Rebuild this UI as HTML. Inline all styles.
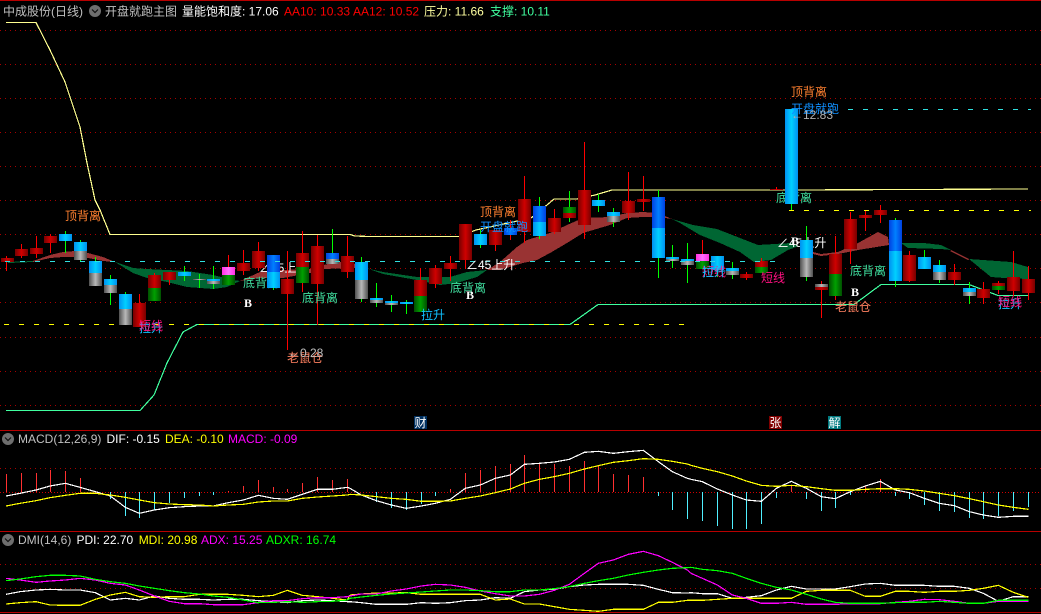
<!DOCTYPE html>
<html><head><meta charset="utf-8">
<style>
html,body{margin:0;padding:0;background:#000;width:1041px;height:614px;overflow:hidden}
svg{display:block;position:absolute;left:0;top:0}
text{font-family:"Liberation Sans","WenQuanYi Zen Hei","Noto Sans CJK SC",sans-serif;font-size:12px;white-space:pre}
.l{font-family:"WenQuanYi Zen Hei","Noto Sans CJK SC","Liberation Sans",sans-serif}
.bb{font-family:"Liberation Serif",serif;font-weight:bold;font-size:12px;fill:#fff}
.ln polyline{fill:none;stroke-width:1.2;vector-effect:non-scaling-stroke;shape-rendering:crispEdges}
.k rect{width:13px;shape-rendering:crispEdges}
.r{fill:url(#gr)}.g{fill:url(#gg)}.c{fill:url(#gc)}.b{fill:url(#gb)}.y{fill:url(#gy)}.p{fill:url(#gp)}
</style></head><body>
<svg width="1041" height="614" viewBox="0 0 1041 614" xmlns="http://www.w3.org/2000/svg">
<defs>
<linearGradient id="gr"><stop offset="0" stop-color="#780000"/><stop offset=".5" stop-color="#d00000"/><stop offset="1" stop-color="#780000"/></linearGradient>
<linearGradient id="gg"><stop offset="0" stop-color="#005000"/><stop offset=".5" stop-color="#00a000"/><stop offset="1" stop-color="#005000"/></linearGradient>
<linearGradient id="gc"><stop offset="0" stop-color="#0090f0"/><stop offset=".5" stop-color="#00d0ff"/><stop offset="1" stop-color="#0090f0"/></linearGradient>
<linearGradient id="gb"><stop offset="0" stop-color="#0040e0"/><stop offset=".5" stop-color="#0080ff"/><stop offset="1" stop-color="#0040e0"/></linearGradient>
<linearGradient id="gy"><stop offset="0" stop-color="#505050"/><stop offset=".5" stop-color="#b8b8b8"/><stop offset="1" stop-color="#505050"/></linearGradient>
<linearGradient id="gp"><stop offset="0" stop-color="#ff30e0"/><stop offset=".5" stop-color="#ff70ff"/><stop offset="1" stop-color="#ff30e0"/></linearGradient>
</defs>
<rect width="1041" height="614" fill="#000"/>

<!-- panel borders -->
<g fill="#b80000" shape-rendering="crispEdges">
<rect x="0" y="0" width="1041" height="1"/>
<rect x="0" y="430" width="1041" height="1"/>
<rect x="0" y="531" width="1041" height="1"/>
<rect x="0" y="612" width="1041" height="1"/>
</g>

<!-- dotted grid -->
<g stroke="#a80000" stroke-width="1" stroke-dasharray="1 4" shape-rendering="crispEdges" fill="none">
<path d="M0 30.5H1041M0 64.5H1041M0 98.5H1041M0 132.5H1041M0 166.5H1041M0 200.5H1041M0 234.5H1041M0 268.5H1041M0 302.5H1041M0 337.5H1041M0 371.5H1041M0 405.5H1041"/>
<path d="M0 468.5H1041M0 564.5H1041M0 588.5H1041"/>
<path d="M0 492.5H1041" stroke="#d00000" stroke-dasharray="1 2"/>
</g>

<!-- cloud ribbon -->
<g shape-rendering="crispEdges">
<polygon fill="#006633" points="8,262 33,261 33,262 8,263"/>
<polygon fill="#993333" points="33,261 50,255 63,252 75,251 88,253 103,257 115,262 103,261 88,258 75,257 63,257 50,258 33,262"/>
<polygon fill="#006633" points="115,262 133,268 147,269 167,270 187,271 213,275 233,280 240,281 227,287 213,289 187,287 167,282 147,278 133,273"/>
<polygon fill="#993333" points="240,281 260,272 283,270 310,269 323,265 340,262 350,262 369,269 350,268 323,269 310,273 283,278 260,278"/>
<polygon fill="#006633" points="369,269 383,272 417,277 450,277 467,272 487,270 477,277 457,283 440,285 417,280 383,274"/>
<polygon fill="#993333" points="487,270 500,262 517,247 527,240 550,233 567,225 583,218 610,217 627,213 643,212 657,213 665,216 672,219 665,218 657,217 643,217 627,218 610,225 583,233 567,243 550,253 537,260 523,263 500,270"/>
<polygon fill="#006633" points="672,219 693,225 705,227 717,229 740,238 758,245 791,243 799,246 788,250 771,260 754,262 740,252 720,243 700,235 680,223"/>
<polygon fill="#993333" points="799,246 813,252 821,254 838,252 858,243 878,232 888,237 889,245 858,250 838,254 821,256 813,254"/>
<polygon fill="#006633" points="901,243 924,243 941,245 951,250 941,249 908,248"/>
<polygon fill="#993333" points="951,250 969,259 968,260 950,251"/>
<polygon fill="#006633" points="969,259 1011,262 1028,267 1028,279 1004,278 991,277"/>
</g>

<!-- main lines -->
<g class="ln">
<polyline stroke="#ffff90" points="6,22.5 36,22.5 50,50 65,82 80,127 87,163 95,200 100,210 110,234.5 350,234.5 355,236 369,236.5 459,236.5 476,230 531,218 547,205 554,199 577,199 595,195 612,190 790,190 1028,189"/>
<polyline stroke="#40ff9f" points="6,410.5 140,410.5 154,395 167,363 183,332 197,324.5 570,324.5 598,304.5 854,304.5 881,284.5 969,284.5 998,295.5 1028,295.5"/>
</g>
<path d="M4 324.5H690" stroke="#ffff00" stroke-dasharray="5 10" shape-rendering="crispEdges" fill="none"/>
<path d="M789 210.5H1031" stroke="#ffff00" stroke-dasharray="5 10" shape-rendering="crispEdges" fill="none"/>
<path d="M848 109.5H1031" stroke="#30e0e0" stroke-dasharray="5 10" shape-rendering="crispEdges" fill="none"/>

<!-- labels behind candles -->
<g class="l">
<text x="243" y="287" fill="#40e0a0">底背离</text>
<text x="259" y="272" fill="#fff">∠45上升</text>
<text x="776" y="202" fill="#40e0a0">底背离</text>
<text x="777" y="247" fill="#fff">∠45上升</text>
</g>

<!-- wicks -->
<path fill="none" stroke="#ff0000" stroke-width="1" shape-rendering="crispEdges" d="M6.5 256V271M21.5 244V258M36.5 236V258M50.5 234V253M139.5 294V327M154.5 273V276M169.5 272V285M228.5 255V268M243.5 250V275M258.5 242V271M287.5 251V350M302.5 231V292M317.5 235V325M347.5 236V278M420.5 268V281M435.5 265V288M450.5 256V281M465.5 224V269M495.5 230V251M510.5 220V240M524.5 176V243M554.5 209V234M584.5 142V239M628.5 172V220M643.5 176V211M702.5 240V255M746.5 272V280M761.5 258V262M776.5 187V190M821.5 281V318M835.5 236V300M850.5 212V264M865.5 211V231M880.5 205V223M909.5 251V282M954.5 264V285M983.5 282V304M998.5 281V294M1013.5 251V296M1028.5 266V300"/>
<path fill="none" stroke="#00ff00" stroke-width="1" shape-rendering="crispEdges" d="M65.5 231V253M80.5 240V262M95.5 257V262M110.5 275V305M125.5 292V295M184.5 266V281M199.5 274V288M213.5 266V289M273.5 286V290M332.5 229V253M361.5 257V302M376.5 283V307M391.5 295V312M406.5 300V314M480.5 230V248M539.5 197V239M569.5 191V222M598.5 194V212M613.5 208V227M658.5 190V278M672.5 245V268M687.5 243V283M717.5 256V277M732.5 262V279M791.5 204V210M806.5 226V281M895.5 218V287M924.5 250V269M939.5 260V283M969.5 282V304"/>

<!-- candles -->
<g class="k">
<rect class="r" x="1" y="258" height="4"/><rect class="r" x="15" y="249" height="7"/><rect class="r" x="30" y="248" height="6"/><rect class="r" x="44" y="236" height="7"/>
<rect class="c" x="59" y="234" height="7"/>
<rect class="c" x="74" y="242" height="9"/><rect class="y" x="74" y="251" height="9"/>
<rect class="c" x="89" y="261" height="12"/><rect class="y" x="89" y="273" height="13"/>
<rect class="c" x="104" y="279" height="6"/><rect class="y" x="104" y="285" height="8"/>
<rect class="c" x="119" y="294" height="15"/><rect class="y" x="119" y="309" height="16"/>
<rect class="r" x="133" y="303" height="24"/>
<rect class="r" x="148" y="275" height="13"/><rect class="g" x="148" y="288" height="13"/>
<rect class="r" x="163" y="272" height="8"/>
<rect class="c" x="178" y="272" height="4"/>
<rect class="y" x="193" y="279" height="1"/>
<rect class="c" x="207" y="279" height="2"/><rect class="y" x="207" y="281" height="3"/>
<rect class="p" x="222" y="267" height="8"/><rect class="g" x="222" y="275" height="10"/>
<rect class="r" x="237" y="263" height="8"/>
<rect class="r" x="252" y="251" height="17"/>
<rect class="b" x="267" y="255" height="17"/><rect class="c" x="267" y="272" height="16"/>
<rect class="r" x="281" y="279" height="15"/>
<rect class="r" x="296" y="253" height="14"/><rect class="g" x="296" y="267" height="16"/>
<rect class="r" x="311" y="246" height="38"/>
<rect class="b" x="326" y="253" height="6"/><rect class="y" x="326" y="259" height="5"/>
<rect class="r" x="341" y="256" height="16"/>
<rect class="c" x="355" y="262" height="18"/><rect class="y" x="355" y="280" height="19"/>
<rect class="c" x="370" y="298" height="2"/><rect class="y" x="370" y="300" height="3"/>
<rect class="c" x="385" y="301" height="2"/><rect class="y" x="385" y="303" height="2"/>
<rect class="c" x="400" y="302" height="2"/>
<rect class="r" x="414" y="280" height="16"/><rect class="g" x="414" y="296" height="16"/>
<rect class="r" x="429" y="268" height="16"/>
<rect class="r" x="444" y="263" height="6"/>
<rect class="r" x="459" y="224" height="36"/>
<rect class="c" x="474" y="234" height="11"/>
<rect class="r" x="489" y="230" height="15"/>
<rect class="b" x="504" y="228" height="7"/>
<rect class="r" x="518" y="199" height="33"/>
<rect class="b" x="533" y="206" height="16"/><rect class="c" x="533" y="222" height="14"/>
<rect class="r" x="548" y="218" height="14"/>
<rect class="g" x="563" y="207" height="6"/><rect class="r" x="563" y="213" height="5"/>
<rect class="r" x="578" y="190" height="35"/>
<rect class="c" x="592" y="200" height="6"/>
<rect class="c" x="607" y="212" height="4"/><rect class="y" x="607" y="216" height="6"/>
<rect class="r" x="622" y="201" height="12"/>
<rect class="r" x="637" y="199" height="3"/>
<rect class="b" x="652" y="197" height="31"/><rect class="c" x="652" y="228" height="30"/>
<rect class="c" x="666" y="257" height="2"/><rect class="y" x="666" y="259" height="2"/>
<rect class="c" x="681" y="259" height="2"/><rect class="y" x="681" y="261" height="4"/>
<rect class="p" x="696" y="254" height="7"/><rect class="g" x="696" y="261" height="8"/>
<rect class="c" x="711" y="256" height="14"/>
<rect class="c" x="726" y="268" height="3"/><rect class="y" x="726" y="271" height="4"/>
<rect class="r" x="740" y="274" height="4"/>
<rect class="r" x="755" y="261" height="6"/><rect class="g" x="755" y="267" height="6"/>
<rect class="r" x="770" y="189" height="1"/>
<rect class="c" x="785" y="109" height="95"/>
<rect class="c" x="800" y="240" height="18"/><rect class="y" x="800" y="258" height="19"/>
<rect class="y" x="815" y="284" height="3"/><rect class="r" x="815" y="287" height="3"/>
<rect class="r" x="829" y="254" height="20"/><rect class="g" x="829" y="274" height="22"/>
<rect class="r" x="844" y="219" height="30"/>
<rect class="r" x="859" y="215" height="3"/>
<rect class="r" x="874" y="210" height="5"/>
<rect class="b" x="889" y="220" height="31"/><rect class="c" x="889" y="251" height="30"/>
<rect class="r" x="903" y="255" height="26"/>
<rect class="c" x="918" y="257" height="12"/>
<rect class="c" x="933" y="265" height="7"/><rect class="y" x="933" y="272" height="8"/>
<rect class="r" x="948" y="272" height="8"/>
<rect class="c" x="963" y="288" height="4"/><rect class="y" x="963" y="292" height="4"/>
<rect class="r" x="977" y="289" height="9"/>
<rect class="r" x="992" y="283" height="3"/><rect class="g" x="992" y="286" height="4"/>
<rect class="r" x="1007" y="277" height="14"/>
<rect class="r" x="1022" y="279" height="14"/>
</g>

<path d="M5 261.5H780" stroke="#30e0e0" stroke-dasharray="5 10" shape-rendering="crispEdges" fill="none"/>

<!-- labels over candles -->
<g class="l">
<text x="65" y="220" fill="#ff8030">顶背离</text>
<text x="139" y="332" fill="#10c0ff">拉升</text>
<text x="139" y="330" fill="#ff1080">短线</text>
<text x="302" y="302" fill="#40e0a0">底背离</text>
<text x="287" y="362" fill="#ff8060">老鼠仓</text>
<text x="288" y="357" fill="#c0c0c0">←0.28</text>
<text x="480" y="216" fill="#ff8030">顶背离</text>
<text x="480" y="231" fill="#1090ff">开盘就跑</text>
<text x="466" y="269" fill="#fff">∠45上升</text>
<text x="450" y="292" fill="#40e0a0">底背离</text>
<text x="421" y="319" fill="#10c0ff">拉升</text>
<text x="791" y="96" fill="#ff8030">顶背离</text>
<text x="791" y="113" fill="#1090ff">开盘就跑</text>
<text x="791" y="119" fill="#b0b0b0">←12.83</text>
<text x="702" y="276" fill="#ff1080">短线</text>
<text x="702" y="276" fill="#10c0ff">拉升</text>
<text x="761" y="282" fill="#ff1080">短线</text>
<text x="835" y="311" fill="#ff8060">老鼠仓</text>
<text x="850" y="275" fill="#40e0a0">底背离</text>
<text x="998" y="308" fill="#10c0ff">拉升</text>
<text x="998" y="306" fill="#ff1080">短线</text>
</g>
<text class="bb" x="244" y="307">B</text>
<text class="bb" x="466" y="299">B</text>
<text class="bb" x="791" y="245">B</text>
<text class="bb" x="851" y="296">B</text>

<!-- news tags -->
<g shape-rendering="crispEdges">
<rect x="414" y="416" width="13" height="13" fill="#003060"/>
<rect x="769" y="416" width="13" height="13" fill="#800000"/>
<rect x="828" y="416" width="13" height="13" fill="#007a80"/>
</g>
<g class="l" fill="#fff">
<text x="414.5" y="427">财</text><text x="769.5" y="427">张</text><text x="828.5" y="427">解</text>
</g>

<!-- MACD bars -->
<path fill="none" stroke="#ff3030" shape-rendering="crispEdges" d="M6.5 474V492M21.5 473V492M36.5 473V492M50.5 470V492M65.5 471V492M80.5 478V492M228.5 491V492M243.5 486V492M258.5 480V492M273.5 487V492M287.5 489V492M302.5 483V492M317.5 477V492M332.5 480V492M347.5 479V492M450.5 489V492M465.5 473V492M480.5 470V492M495.5 466V492M510.5 464V492M524.5 455V492M539.5 463V492M554.5 464V492M569.5 466V492M584.5 461V492M598.5 465V492M613.5 474V492M628.5 475V492M643.5 477V492M791.5 485V492M865.5 486V492M880.5 479V492"/>
<path fill="none" stroke="#50f0ff" shape-rendering="crispEdges" d="M110.5 492V499M125.5 492V516M139.5 492V518M154.5 492V510M169.5 492V503M184.5 492V498M199.5 492V496M213.5 492V495M376.5 492V502M391.5 492V508M406.5 492V510M421.5 492V504M435.5 492V496M658.5 492V496M672.5 492V510M687.5 492V519M702.5 492V521M717.5 492V526M732.5 492V529M746.5 492V529M761.5 492V524M776.5 492V498M806.5 492V499M821.5 492V511M835.5 492V508M850.5 492V495M895.5 492V496M909.5 492V499M924.5 492V505M939.5 492V511M954.5 492V512M969.5 492V518M983.5 492V519M998.5 492V516M1013.5 492V511M1028.5 492V507"/>

<!-- MACD / DMI lines, zoom-coordinate segments -->
<g class="ln">
<g transform="translate(0,410) scale(.33333)">
<polyline stroke="#fff" points="18,258 60,250 108,240 150,228 196,220 240,232 286,245 331,258 376,292 418,310 463,300 508,293 553,290 598,288 640,288 685,278 730,270 775,256 820,265 862,268 907,253 952,238 997,238 1042,232 1050,235"/>
<polyline stroke="#ffff00" points="18,288 60,280 108,272 150,263 196,256 240,250 286,250 331,255 376,262 418,270 463,278 508,282 553,284 598,285 640,288 685,285 730,283 775,276 820,273 862,273 907,265 952,261 997,258 1042,255 1050,253"/>
<polyline stroke="#fff" points="18,553 60,545 108,540 150,538 196,540 240,540 286,548 331,570 376,565 418,570 463,558 508,565 553,568 598,568 640,570 685,568 730,568 775,572 820,575 862,578 907,572 952,570 997,572 1042,575 1050,575"/>
<polyline stroke="#ffff00" points="18,582 60,578 108,575 150,585 196,586 240,586 286,568 331,555 376,547 418,560 463,562 508,560 553,560 598,553 640,553 685,553 730,556 775,560 820,556 862,541 907,556 952,560 997,565 1042,570 1050,555"/>
<polyline stroke="#ff00ff" points="18,505 60,510 108,517 150,513 196,510 240,505 286,510 331,520 376,525 418,540 463,558 508,574 553,581 598,581 640,584 685,584 730,584 775,578 820,572 862,572 907,566 952,563 997,563 1042,560 1050,558"/>
<polyline stroke="#00ff00" points="18,512 60,507 108,500 150,496 196,496 240,498 286,508 331,515 376,520 418,528 463,535 508,542 553,548 598,552 640,558 685,562 730,570 775,578 820,577 862,575 907,577 952,575 997,574 1042,570 1050,565"/>
</g>
<g transform="translate(350,410) scale(.33333)">
<polyline stroke="#fff" points="0,235 34,255 79,272 124,285 169,295 214,288 256,280 301,268 346,235 391,225 436,205 481,195 523,163 568,160 613,156 658,148 703,127 745,124 790,130 835,125 880,121 925,155 967,185 1012,205 1023,208"/>
<polyline stroke="#ffff00" points="0,253 34,255 79,260 124,265 169,268 214,274 256,274 301,273 346,265 391,258 436,248 481,237 523,220 568,208 613,200 658,190 703,177 745,167 790,157 835,152 880,146 925,148 967,154 1012,162 1023,166"/>
<polyline stroke="#fff" points="0,575 34,578 79,583 124,583 169,583 214,578 256,580 301,578 346,572 391,570 436,563 481,565 523,545 568,540 613,538 658,530 703,525 745,523 790,523 835,523 880,526 925,538 967,548 1012,549 1023,548"/>
<polyline stroke="#ffff00" points="0,555 34,552 79,549 124,549 169,548 214,553 256,553 301,553 346,553 391,553 436,570 481,567 523,582 568,582 613,590 658,598 703,601 745,604 790,598 835,598 880,598 925,577 967,577 1012,571 1023,571"/>
<polyline stroke="#ff00ff" points="0,558 34,552 79,552 124,543 169,537 214,528 256,523 301,525 346,532 391,543 436,551 481,558 523,558 568,553 613,541 658,523 703,490 745,460 790,450 835,433 880,424 925,437 967,457 1012,480 1023,490"/>
<polyline stroke="#00ff00" points="0,565 34,561 79,556 124,552 169,549 214,546 256,543 301,540 346,540 391,542 436,545 481,545 523,540 568,540 613,536 658,530 703,520 745,512 790,505 835,495 880,487 925,480 967,475 1012,473 1023,472"/>
</g>
<g transform="translate(691,410) scale(.33333)">
<polyline stroke="#fff" points="0,208 34,215 79,237 124,255 166,270 211,274 256,235 301,214 346,235 391,260 433,266 478,245 523,228 568,214 613,240 655,248 700,265 745,280 790,287 835,305 877,315 922,322 967,319 1012,319"/>
<polyline stroke="#ffff00" points="0,166 34,175 79,185 124,198 166,213 211,226 256,229 301,226 346,230 391,236 433,241 478,241 523,238 568,236 613,236 655,238 700,243 745,250 790,257 835,266 877,275 922,285 967,292 1012,298"/>
<polyline stroke="#fff" points="0,548 34,551 79,551 124,565 166,562 211,557 256,540 301,529 346,537 391,537 433,537 478,530 523,522 568,520 613,526 655,526 700,526 745,529 790,529 835,535 877,550 922,574 967,560 1012,560"/>
<polyline stroke="#ffff00" points="0,571 34,571 79,568 124,565 166,565 211,565 256,565 301,565 346,544 391,541 433,541 478,541 523,559 568,559 613,544 655,544 700,547 745,544 790,544 835,541 877,535 922,526 967,547 1012,562"/>
<polyline stroke="#ff00ff" points="0,490 34,505 79,525 124,555 166,565 211,580 256,580 301,577 346,583 391,583 433,583 478,581 523,581 568,581 613,577 655,574 700,568 745,569 790,574 835,580 877,580 922,574 967,574 1012,574"/>
<polyline stroke="#00ff00" points="0,472 34,478 79,482 124,490 166,505 211,520 256,532 301,540 346,553 391,567 433,577 478,580 523,580 568,580 613,578 655,577 700,577 745,574 790,577 835,580 877,580 922,571 967,571 1012,571"/>
</g>
</g>

<!-- headers -->
<text x="3" y="15.5" fill="#c0c0c0">中成股份(日线)</text>
<circle cx="95" cy="11" r="6" fill="#6e6e6e"/><path d="M92 9.5l3 3 3-3" fill="none" stroke="#111" stroke-width="1.2"/>
<text x="105" y="15.5" fill="#c0c0c0">开盘就跑主图</text>
<text x="182" y="15.5" fill="#fff">量能饱和度: 17.06</text>
<text x="284" y="15.5" fill="#ff0000">AA10: 10.33</text>
<text x="353" y="15.5" fill="#ff0000">AA12: 10.52</text>
<text x="424" y="15.5" fill="#ffffa0">压力: 11.66</text>
<text x="490" y="15.5" fill="#40ff9f">支撑: 10.11</text>

<circle cx="8" cy="439" r="6" fill="#6e6e6e"/><path d="M5 437.5l3 3 3-3" fill="none" stroke="#111" stroke-width="1.2"/>
<text x="18" y="443" fill="#c0c0c0">MACD(12,26,9)</text>
<text x="106.5" y="443" fill="#fff">DIF: -0.15</text>
<text x="165" y="443" fill="#ffff00">DEA: -0.10</text>
<text x="228" y="443" fill="#ff00ff">MACD: -0.09</text>

<circle cx="8" cy="540" r="6" fill="#6e6e6e"/><path d="M5 538.5l3 3 3-3" fill="none" stroke="#111" stroke-width="1.2"/>
<text x="18" y="544" fill="#c0c0c0">DMI(14,6)</text>
<text x="76.5" y="544" fill="#fff">PDI: 22.70</text>
<text x="138.7" y="544" fill="#ffff00">MDI: 20.98</text>
<text x="201" y="544" fill="#ff00ff">ADX: 15.25</text>
<text x="266" y="544" fill="#00ff00">ADXR: 16.74</text>
</svg>
</body></html>
